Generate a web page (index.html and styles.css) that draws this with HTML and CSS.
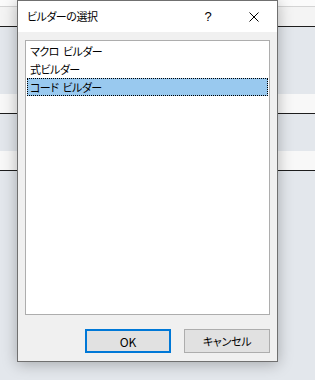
FILE: index.html
```html
<!DOCTYPE html>
<html lang="ja">
<head>
    <meta charset="UTF-8">
    <meta name="viewport" content="width=device-width, initial-scale=1.0">
    <title>ビルダーの選択</title>
    <link rel="stylesheet" href="styles.css">
</head>
<body>
    <div class="backdrop">
        <div class="strip strip-top"></div>
        <div class="strip strip-head"></div>
        <div class="strip strip-grey tall"></div>
        <div class="strip strip-light"></div>
        <div class="strip strip-grey mid"></div>
        <div class="strip strip-light"></div>
        <div class="strip strip-grey rest"></div>
    </div>

    <div class="dialog">
        <div class="titlebar">
            <span class="title">ビルダーの選択</span>
            <span class="title-btn help">?</span>
            <span class="title-btn close">
                <svg width="10" height="10" viewBox="0 0 10 10">
                    <path d="M0.5 0.5 L9.5 9.5 M9.5 0.5 L0.5 9.5" stroke="#000" stroke-width="1" fill="none"/>
                </svg>
            </span>
        </div>
        <div class="dialog-body">
            <div class="listbox">
                <div class="list-item">マクロ ビルダー</div>
                <div class="list-item">式ビルダー</div>
                <div class="list-item selected">コード ビルダー</div>
            </div>
            <div class="buttons">
                <button class="btn btn-default">OK</button>
                <button class="btn btn-jp">キャンセル</button>
            </div>
        </div>
    </div>
</body>
</html>
```

FILE: styles.css
```css
body {
  margin: 0;
  width: 315px;
  height: 380px;
  overflow: hidden;
  background-color: #e3e7ec;
  font-family: "Noto Sans CJK JP", "Noto Sans", sans-serif;
  font-size: 11px;
  letter-spacing: -0.5px;
  word-spacing: 2px;
  color: #000;
  font-feature-settings: "palt";
}

/* window behind the dialog */
.backdrop {
  display: flex;
  flex-direction: column;
}

.strip-top {
  height: 6px;
  background-color: #fbfbfb;
  border-bottom: 1px solid #d4d4d4;
}

.strip-head {
  height: 19px;
  background-color: #f4f4f4;
  border-bottom: 1px solid #1e1e1e;
}

.strip-grey {
  background-color: #e3e7ec;
}

.strip-grey.tall {
  height: 67px;
}

.strip-grey.mid {
  height: 37px;
}

.strip-light {
  height: 19px;
  background-color: #f8f8f8;
  border-bottom: 1px solid #1e1e1e;
}

/* dialog */
.dialog {
  position: absolute;
  left: 17px;
  top: 0;
  width: 259px;
  height: 360px;
  border: 1px solid #707070;
  background-color: #f0f0f0;
  box-shadow: 0 2px 14px rgba(0, 0, 0, 0.28);
  display: flex;
  flex-direction: column;
}

.titlebar {
  height: 31px;
  background-color: #fff;
  display: flex;
  align-items: center;
}

.title {
  padding-left: 9px;
  flex: 1;
  line-height: 29px;
}

.title-btn {
  width: 46px;
  height: 31px;
  display: flex;
  align-items: center;
  justify-content: center;
}

.help {
  font-family: "Liberation Sans", sans-serif;
  font-size: 13px;
  letter-spacing: 0;
}

.dialog-body {
  flex: 1;
  padding: 8px 7px 9px 7px;
  display: flex;
  flex-direction: column;
}

.listbox {
  height: 272px;
  border: 1px solid #adadad;
  background-color: #fff;
  padding: 1px 1px 0 1px;
}

.list-item {
  height: 18px;
  line-height: 19px;
  padding-left: 3px;
  white-space: nowrap;
}

.list-item.selected {
  background-color: #99c9ef;
  outline: 1px dotted #000;
  outline-offset: -1px;
}

.buttons {
  margin-top: 14px;
  display: flex;
  justify-content: flex-end;
  gap: 13px;
}

.btn {
  width: 86px;
  height: 24px;
  border: 1px solid #adadad;
  background-color: #e1e1e1;
  font-family: inherit;
  font-size: 12px;
  letter-spacing: 0;
  font-feature-settings: "palt";
  color: #000;
  padding: 0;
}

.btn-jp {
  font-size: 11px;
  letter-spacing: -0.3px;
}

.btn-default {
  border: 2px solid #0078d7;
}
```
